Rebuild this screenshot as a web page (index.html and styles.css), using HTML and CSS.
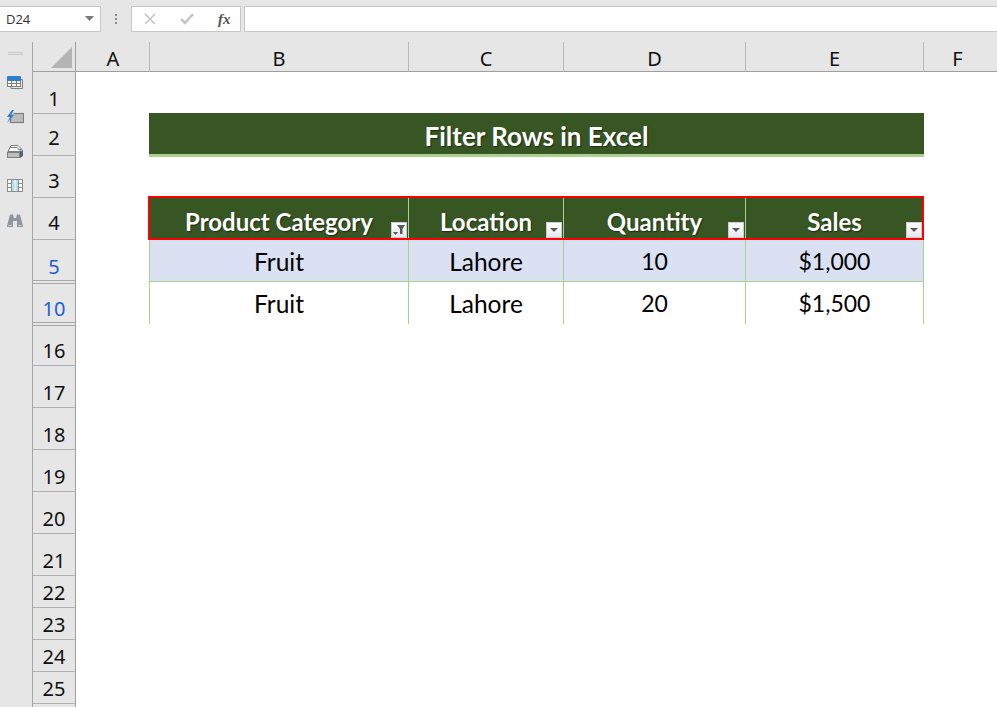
FILE: index.html
```html
<!DOCTYPE html>
<html lang="en">
<head>
<meta charset="utf-8">
<title>Filter Rows in Excel</title>
<link rel="stylesheet" href="styles.css">
</head>
<body>
<div class="app">
  <div class="formula-bar">
    <div class="name-box"><span>D24</span>
      <svg class="name-arrow" width="9" height="5" viewBox="0 0 9 5"><path d="M0 0h9L4.500 5z" fill="#7a7a7a"/></svg>
    </div>
    <div class="grip-dots"><i></i><i></i><i></i></div>
    <div class="fx-box">
      <svg width="12" height="12" viewBox="0 0 12 12"><path d="M1 1l10 10M11 1L1 11" stroke="#c4c4c4" stroke-width="1.500" fill="none"/></svg>
      <svg width="14" height="12" viewBox="0 0 14 12"><path d="M1 6l4 4 8-9" stroke="#c4c4c4" stroke-width="2.500" fill="none"/></svg>
      <span class="fx">fx</span>
    </div>
    <div class="formula-input"></div>
  </div>
  <div class="workspace">
    <aside class="sidebar">
      <div class="side-grip"></div>
      <svg class="side-icon" width="16" height="14" viewBox="0 0 16 14">
        <path d="M14 3.500h1.500v9H4v-2" fill="none" stroke="#7f7f7f"/>
        <rect x="0.500" y="1.500" width="13" height="9" fill="#fff" stroke="#7f7f7f"/>
        <path d="M1 0h12a1 1 0 0 1 1 1v4H0V1a1 1 0 0 1 1-1z" fill="#2f7fd0"/>
        <path d="M4.500 5v6M9.500 5v6M0 7.500h14" stroke="#7f7f7f" fill="none"/>
      </svg>
      <svg class="side-icon" width="18" height="14" viewBox="0 0 18 14">
        <rect x="4.500" y="3.500" width="13" height="9" fill="#bdbdbd" stroke="#7f7f7f" stroke-width="1.200"/>
        <path d="M4 3.500h3.500" stroke="#e6e6e6"/>
        <path d="M6 0L1 7h3l-3 6 7-8H5l3-5z" fill="#2f7fd0"/>
      </svg>
      <svg class="side-icon" width="16" height="14" viewBox="0 0 16 14">
        <path d="M4 0.500h7l4 4H2z" fill="#fff" stroke="#7f7f7f"/>
        <path d="M3 2.500h7l4 4H1z" fill="#fff" stroke="#7f7f7f"/>
        <rect x="0.500" y="7.500" width="12" height="5" fill="#bdbdbd" stroke="#7f7f7f"/>
        <path d="M13 7l3-2v6l-3 2z" fill="#4f6478"/>
      </svg>
      <svg class="side-icon" width="16" height="14" viewBox="0 0 16 14">
        <rect x="0.500" y="0.500" width="15" height="12" fill="#fff" stroke="#8c8c8c"/>
        <rect x="5" y="1" width="6" height="11" fill="#b5e0e2"/>
        <path d="M8 1v11" stroke="#fff"/>
        <path d="M4.500 0v13M11.500 0v13M1 4.500h3M1 8.500h3M12 4.500h3M12 8.500h3" stroke="#8c8c8c" fill="none"/>
      </svg>
      <svg class="side-icon" width="16" height="14" viewBox="0 0 16 14">
        <path d="M3 0.500h3l1 3.500h2l1-3.500h3L16 12v1H10V7H6v6H0v-1z" fill="#8f98a0"/>
        <path d="M1.500 11.500h3M11.500 11.500h3" stroke="#d4d8dc"/>
      </svg>
    </aside>
    <div class="sheet">
      <div class="corner"><svg width="21" height="21" viewBox="0 0 21 21"><path d="M21 0v21H0z" fill="#b4b4b4"/></svg></div>
      <div class="col-head col-a">A</div>
      <div class="col-head">B</div>
      <div class="col-head">C</div>
      <div class="col-head">D</div>
      <div class="col-head">E</div>
      <div class="col-head col-f">F</div>

      <div class="row-head r1">1</div>
      <div class="row-head r2">2</div>
      <div class="row-head r3">3</div>
      <div class="row-head r4">4</div>
      <div class="row-head r5 active gap-below">5</div>
      <div class="row-head r6 active gap-both">10</div>
      <div class="row-head r7 gap-above">16</div>
      <div class="row-head r8">17</div>
      <div class="row-head r9">18</div>
      <div class="row-head r10">19</div>
      <div class="row-head r11">20</div>
      <div class="row-head r12">21</div>
      <div class="row-head r13">22</div>
      <div class="row-head r14">23</div>
      <div class="row-head r15">24</div>
      <div class="row-head r16">25</div>
      <div class="row-head r17"></div>

      <div class="title">Filter Rows in Excel</div>

      <div class="th cb">Product Category<span class="filter"><svg width="12" height="10" viewBox="0 0 12 10"><path d="M4 0h8L9.500 4v5H7V4z" fill="#5a5a5a"/><path d="M0 7h5L2.500 10z" fill="#5a5a5a"/></svg></span></div>
      <div class="th cc">Location<span class="filter"><svg width="8" height="4" viewBox="0 0 8 4"><path d="M0 0h8L4 4z" fill="#5a5a5a"/></svg></span></div>
      <div class="th cd">Quantity<span class="filter"><svg width="8" height="4" viewBox="0 0 8 4"><path d="M0 0h8L4 4z" fill="#5a5a5a"/></svg></span></div>
      <div class="th ce">Sales<span class="filter"><svg width="8" height="4" viewBox="0 0 8 4"><path d="M0 0h8L4 4z" fill="#5a5a5a"/></svg></span></div>
      <div class="red-outline"></div>

      <div class="td cb r5 band">Fruit</div>
      <div class="td cc r5 band">Lahore</div>
      <div class="td cd r5 band num">10</div>
      <div class="td ce r5 band num">$1,000</div>
      <div class="td cb r6 last">Fruit</div>
      <div class="td cc r6 last">Lahore</div>
      <div class="td cd r6 last num">20</div>
      <div class="td ce r6 last num">$1,500</div>
    </div>
  </div>
</div>
</body>
</html>
```
FILE: styles.css
```css
* { box-sizing: border-box; }
html, body { margin: 0; height: 100%; }
body { background: #e6e6e6; overflow: hidden; font-family: "Lato", "Liberation Sans", sans-serif; }
.app { width: 997px; height: 707px; display: flex; flex-direction: column; overflow: hidden; }

.formula-bar { height: 42px; padding-top: 6px; display: flex; align-items: flex-start; }
.name-box { width: 101px; height: 26px; background: #fff; border: 1px solid #c6c6c6; border-left: 0; display: flex; align-items: center; justify-content: space-between; padding: 0 6px 0 6px; font: 13px "Open Sans", sans-serif; color: #333; }
.name-arrow { margin-top: -2px; }
.grip-dots { width: 30px; height: 26px; display: flex; flex-direction: column; gap: 2px; align-items: center; justify-content: center; }
.grip-dots i { width: 2px; height: 2px; background: #8a8a8a; }
.fx-box { width: 110px; height: 26px; background: #fff; border: 1px solid #c6c6c6; display: flex; align-items: center; padding-left: 12px; gap: 24px; }
.fx { font: italic 700 15px "Liberation Serif", serif; color: #555; }
.formula-input { flex: 1; height: 26px; margin-left: 3px; background: #fff; border: 1px solid #c6c6c6; border-right: 0; }

.workspace { flex: 1; display: flex; min-height: 0; }
.sidebar { width: 33px; border-right: 1px solid #a6a6a6; display: flex; flex-direction: column; align-items: center; padding: 10px 2px 0 0; gap: 20.500px; flex: none; }
.side-grip { width: 15px; height: 3px; border-top: 1px solid #c8c8c8; border-bottom: 1px solid #c8c8c8; margin-bottom: 0; }
.side-icon { flex: none; }

.sheet { flex: 1; background: #fff; display: grid;
  grid-template-columns: 43px 74px 259px 155px 182px 178px 73px;
  grid-template-rows: 30px repeat(12, 42px) repeat(4, 32px) 32px;
  overflow: hidden; }

.corner { background: #e6e6e6; border-bottom: 1px solid #9f9f9f; border-right: 1px solid #9f9f9f; display: flex; align-items: flex-start; justify-content: flex-start; padding: 5px 0 0 18px; }
.col-head { background: #e6e6e6; border-bottom: 1px solid #9f9f9f; border-right: 1px solid #b8b8b8; display: flex; align-items: center; justify-content: center; font: 20px/1 "Noto Sans", sans-serif; color: #111; padding-top: 4px; }
.col-a { padding-left: 1px; }
.col-f { border-right: 0; padding-right: 6px; }

.row-head { grid-column: 1; background: #e6e6e6; border-bottom: 1px solid #b0b0b0; border-right: 1px solid #9f9f9f; display: flex; align-items: flex-end; justify-content: center; font: 20px/1 "Noto Sans", sans-serif; color: #111; padding-bottom: 4px; }
.row-head.active { color: #1c5fd8; }
.row-head.r2 { padding-bottom: 7px; }
.row-head.r3, .row-head.r4 { padding-bottom: 6px; }
.gap-below, .gap-both { border-bottom: 0; padding-bottom: 5px; }
.gap-below { box-shadow: inset 0 -1px 0 #e6e6e6, inset 0 -2px 0 #a8a8a8; }
.gap-above { box-shadow: inset 0 1px 0 #e6e6e6, inset 0 2px 0 #a8a8a8; }
.gap-both { box-shadow: inset 0 -1px 0 #e6e6e6, inset 0 -2px 0 #a8a8a8, inset 0 1px 0 #e6e6e6, inset 0 2px 0 #a8a8a8; }
.r1 { grid-row: 2; } .r2 { grid-row: 3; } .r3 { grid-row: 4; } .r4 { grid-row: 5; }
.r5 { grid-row: 6; } .r6 { grid-row: 7; } .r7 { grid-row: 8; } .r8 { grid-row: 9; }
.r9 { grid-row: 10; } .r10 { grid-row: 11; } .r11 { grid-row: 12; } .r12 { grid-row: 13; }
.r13 { grid-row: 14; } .r14 { grid-row: 15; } .r15 { grid-row: 16; } .r16 { grid-row: 17; } .r17 { grid-row: 18; }

.title { grid-column: 3 / 7; grid-row: 3; margin: -1px 0 -1px -1px; padding-top: 4px; background: #375623; border-bottom: 3px solid #a9d08e; display: flex; align-items: center; justify-content: center; color: #fff; font-weight: 700; font-size: 26px; text-shadow: 1px 1px 1px #1d2e12; }

.cb { grid-column: 3; } .cc { grid-column: 4; } .cd { grid-column: 5; } .ce { grid-column: 6; }

.th { grid-row: 5; position: relative; background: #375623; border-right: 1px solid #a9d08e; display: flex; align-items: flex-end; justify-content: center; color: #fff; font-weight: 700; font-size: 24px; line-height: 1; padding-bottom: 6px; text-shadow: 1px 1px 1px #1d2e12; }
.filter { position: absolute; right: 1px; bottom: 2px; width: 16px; height: 16px; background: linear-gradient(#fff, #e4e8ee); border: 1px solid #c8cdd2; display: flex; align-items: center; justify-content: center; }
.red-outline { grid-column: 3 / 7; grid-row: 5; margin: -2px 0 0 -2px; border: 2px solid #f00; z-index: 2; }

.td { display: flex; align-items: center; justify-content: center; background: #fff; border-right: 1px solid #a9d08e; border-bottom: 1px solid #a9d08e; box-shadow: -1px 0 0 #a9d08e; font-size: 24.500px; color: #000; }
.td.num { font-size: 23px; }
.td.band { background: #d9e1f2; padding-top: 1px; }
.td.last { border-bottom: 0; }
```
